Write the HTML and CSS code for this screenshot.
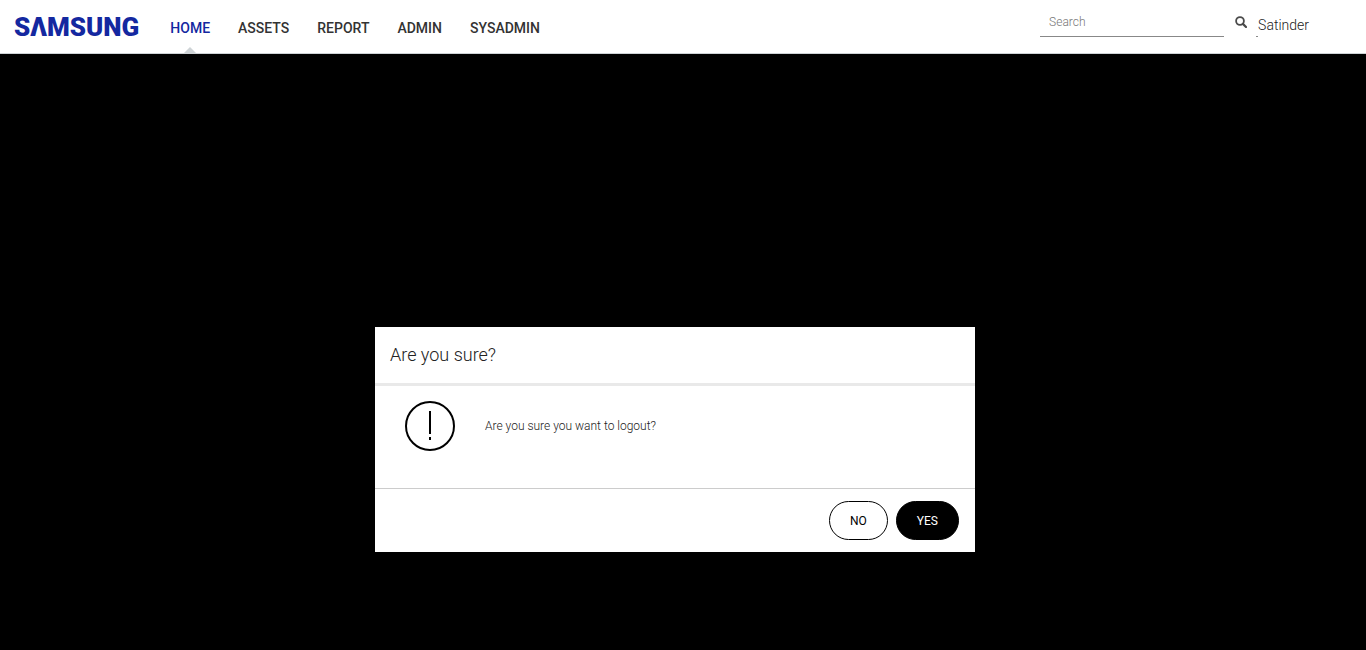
FILE: index.html
```html
<!DOCTYPE html>
<html lang="en">
<head>
<meta charset="utf-8">
<meta name="viewport" content="width=device-width, initial-scale=1">
<title>Samsung</title>
<link rel="stylesheet" href="styles.css">
</head>
<body>
<header class="topbar">
  <a class="brand" href="#" aria-label="Samsung">SΛMSUNG</a>
  <nav class="menu">
    <a class="menu-item active" href="#">HOME</a>
    <a class="menu-item" href="#">ASSETS</a>
    <a class="menu-item" href="#">REPORT</a>
    <a class="menu-item" href="#">ADMIN</a>
    <a class="menu-item" href="#">SYSADMIN</a>
  </nav>
  <form class="search">
    <input class="search-input" type="text" placeholder="Search" aria-label="Search">
    <button class="search-button" type="button" aria-label="Search">
      <svg width="12" height="12" viewBox="0 0 12 12" fill="none" stroke="#4a4a4a" aria-hidden="true">
        <circle cx="5" cy="5" r="3.9" stroke-width="1.8"/>
        <path d="M7.9 7.9L11 11" stroke-width="2.2" stroke-linecap="round"/>
      </svg>
    </button>
  </form>
  <a class="user" href="#">Satinder</a>
</header>
<main class="backdrop">
  <section class="dialog" role="dialog" aria-labelledby="dialog-title">
    <h1 class="dialog-title" id="dialog-title">Are you sure?</h1>
    <div class="dialog-body">
      <svg width="50" height="50" viewBox="0 0 50 50" fill="none" stroke="#000" stroke-width="2" aria-hidden="true">
        <circle cx="25" cy="25" r="24"/>
        <path d="M25 10V33M25 36V39"/>
      </svg>
      <p class="message">Are you sure you want to logout?</p>
    </div>
    <div class="dialog-actions">
      <button class="button" type="button">NO</button>
      <button class="button primary" type="button">YES</button>
    </div>
  </section>
</main>
</body>
</html>
```
FILE: styles.css
```css
* { box-sizing: border-box; }

body {
  display: flex;
  flex-direction: column;
  min-height: 100vh;
  margin: 0;
  background: #000;
  color: #222;
  font-family: Roboto, "Noto Sans", sans-serif;
}

a { color: inherit; text-decoration: none; }

.topbar {
  display: flex;
  height: 54px;
  padding: 0 57px 0 14px;
  background: #fff;
  border-bottom: 1px solid #ced3d6;
}

.brand {
  color: #1428a0;
  font-size: 26px;
  font-weight: 900;
  line-height: 54px;
}

.menu {
  display: flex;
  gap: 28px;
  margin-left: 31px;
}

.menu-item {
  position: relative;
  color: #333;
  font-size: 14px;
  font-weight: 500;
  line-height: 56px;
}

.menu-item.active { color: #1428a0; }

.menu-item.active::after {
  content: "";
  position: absolute;
  bottom: 0;
  left: calc(50% - 6px);
  border: 6px solid transparent;
  border-top: 0;
  border-bottom-color: #ced3d6;
}

.search {
  display: flex;
  align-items: flex-start;
  gap: 11px;
  margin-left: auto;
}

.search-input {
  width: 184px;
  height: 31px;
  margin-top: 6px;
  padding: 2px 9px 0;
  border: 0;
  border-bottom: 1px solid #888;
  background: transparent;
  font: 300 12px Roboto, "Noto Sans", sans-serif;
}

.search-input::placeholder { color: #777; }

.search-button {
  display: flex;
  margin-top: 16px;
  padding: 0;
  border: 0;
  background: none;
}

.user {
  position: relative;
  margin-left: 11px;
  font-size: 14px;
  font-weight: 300;
  line-height: 50px;
}

.user::before {
  content: "";
  position: absolute;
  top: 36px;
  left: -2px;
  width: 2px;
  height: 1px;
  background: #888;
}

.backdrop {
  flex: 1;
  padding: 273px 16px 24px 0;
}

.dialog {
  max-width: 600px;
  margin: 0 auto;
  background: #fff;
}

.dialog-title {
  margin: 0;
  padding: 0 15px;
  border-bottom: 3px solid #e9e9e9;
  font-size: 18px;
  font-weight: 300;
  line-height: 56px;
}

.dialog-body {
  display: flex;
  align-items: center;
  gap: 30px;
  padding: 15px 30px 37px;
}

.message {
  margin: 0;
  font-size: 12px;
  font-weight: 300;
}

.dialog-actions {
  display: flex;
  justify-content: flex-end;
  gap: 8px;
  padding: 12px 16px;
  border-top: 1px solid #ccc;
}

.button {
  height: 39px;
  padding: 0 20px;
  border: 1px solid #000;
  border-radius: 20px;
  background: #fff;
  color: #000;
  font: 400 12px Roboto, "Noto Sans", sans-serif;
}

.button.primary { background: #000; color: #fff; }
```
